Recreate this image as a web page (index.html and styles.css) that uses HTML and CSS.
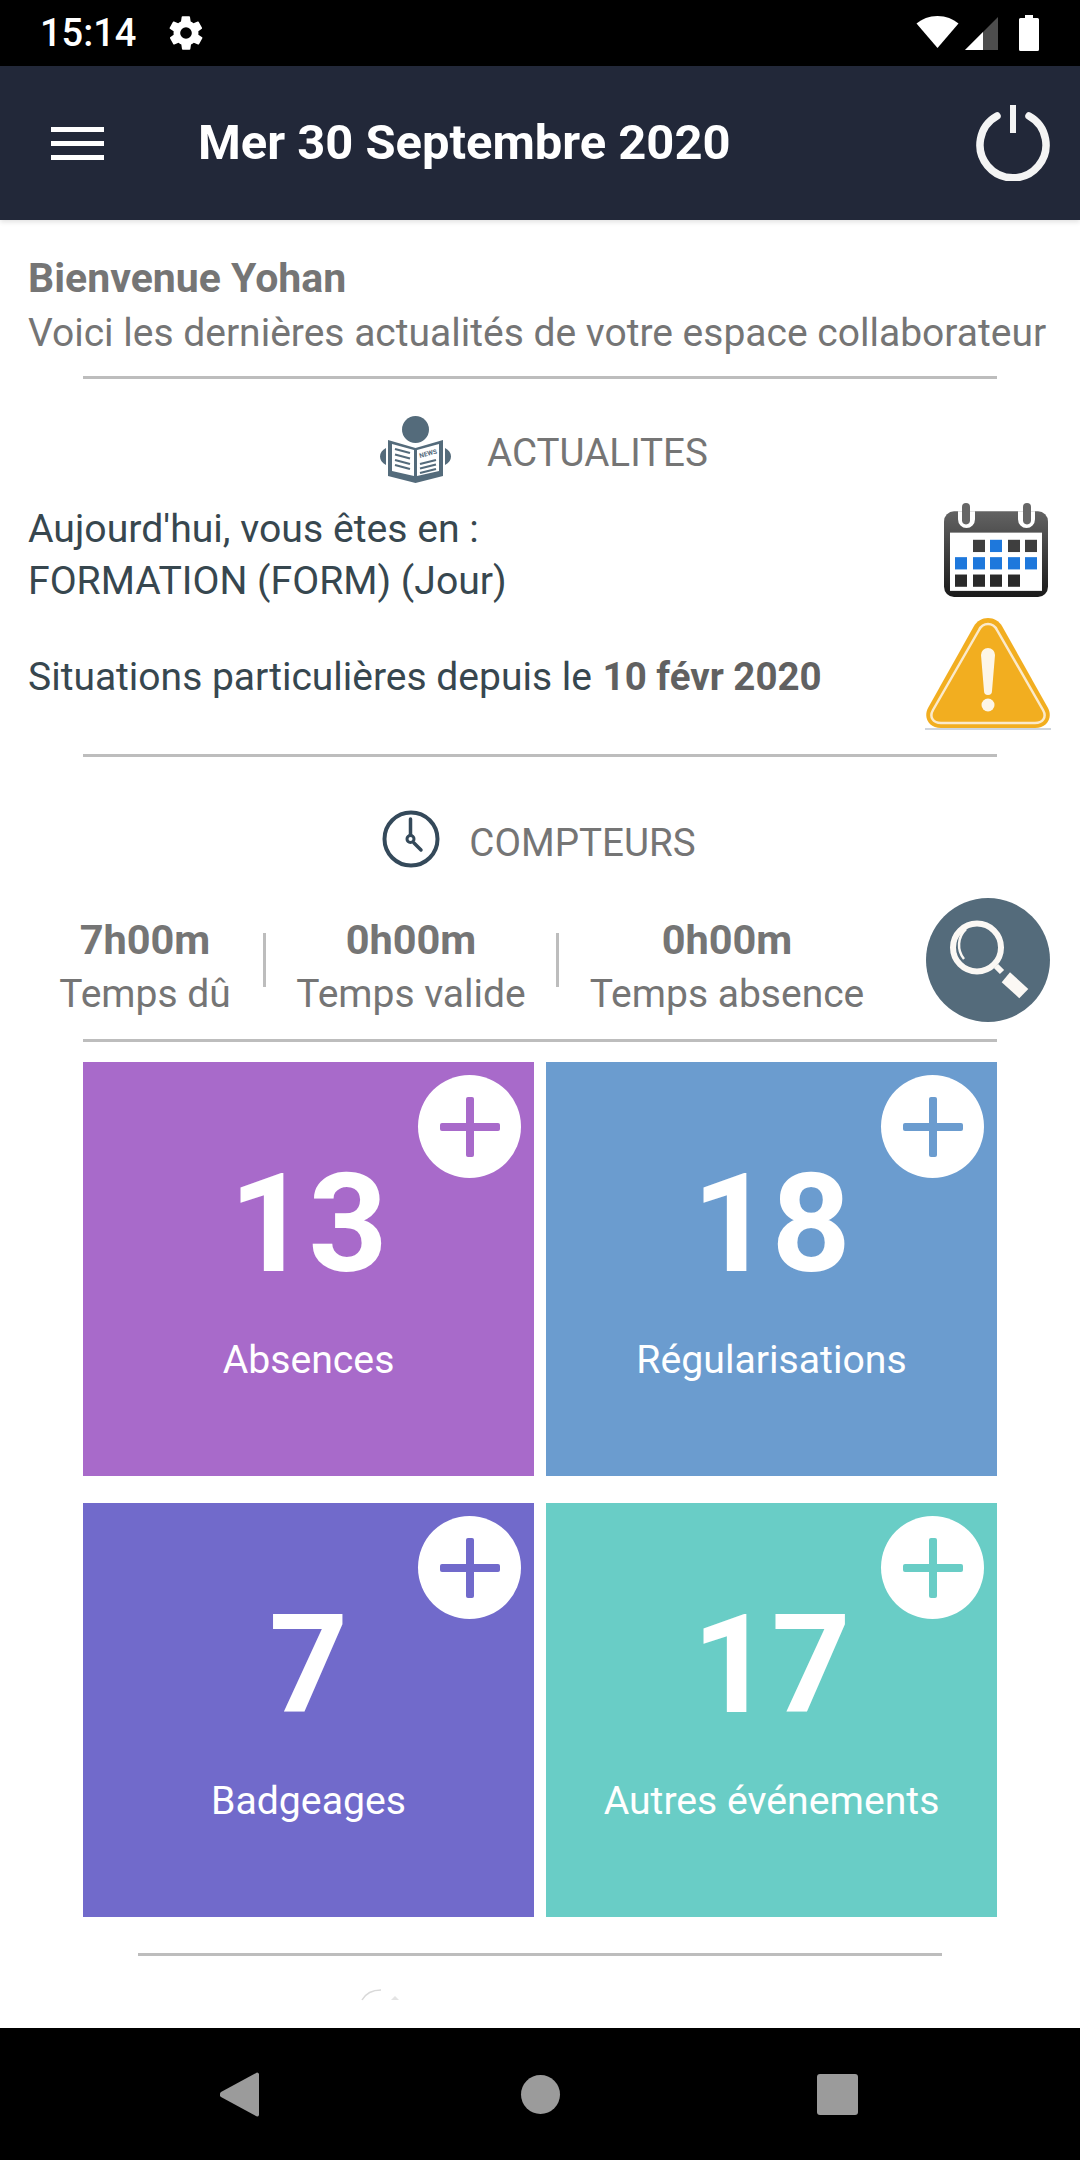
FILE: index.html
```html
<!DOCTYPE html>
<html lang="fr">
<head>
<meta charset="utf-8">
<title>Accueil</title>
<link rel="stylesheet" href="styles.css">
</head>
<body>
<div class="screen">
  <div class="statusbar">
    <div class="status-left">
      <span class="clock">15:14</span>
      <svg class="gear" viewBox="0 0 24 24"><path fill="#fff" d="M19.4 13a7.5 7.5 0 0 0 0-2l2.1-1.6a.5.5 0 0 0 .1-.6l-2-3.5a.5.5 0 0 0-.6-.2l-2.5 1a7.300 7.300 0 0 0-1.700-1l-.4-2.700a.5.5 0 0 0-.5-.4h-4a.5.500 0 0 0-.5.4l-.4 2.700a7.700 7.700 0 0 0-1.700 1l-2.500-1a.5.5 0 0 0-.6.200l-2 3.500a.5.500 0 0 0 .1.600L4.600 11a7.500 7.500 0 0 0 0 2l-2.100 1.600a.5.500 0 0 0-.1.600l2 3.500a.5.500 0 0 0 .6.200l2.500-1a7.300 7.300 0 0 0 1.700 1l.4 2.700a.5.500 0 0 0 .5.400h4a.5.500 0 0 0 .5-.4l.4-2.700a7.700 7.700 0 0 0 1.700-1l2.500 1a.5.500 0 0 0 .6-.2l2-3.500a.5.500 0 0 0-.1-.6zM12 15.500a3.500 3.500 0 1 1 0-7 3.500 3.500 0 0 1 0 7z"/></svg>
    </div>
    <div class="status-right">
      <svg class="wifi" viewBox="0 0 43 32"><path fill="#fff" d="M21.500 32 0.500 7.500C6 3 13 0 21.500 0S37 3 42.500 7.500z"/></svg>
      <svg class="signal" viewBox="0 0 33 33"><path fill="#4d4d4d" d="M33 0v33H0z"/><path fill="#fff" d="M18 15v18H0z"/></svg>
      <svg class="battery" viewBox="0 0 20 36"><path fill="#fff" d="M6 0h8v3h4.500a1.500 1.500 0 0 1 1.500 1.500v30a1.500 1.500 0 0 1-1.500 1.500h-17A1.500 1.500 0 0 1 0 34.500v-30A1.500 1.500 0 0 1 1.500 3H6z"/></svg>
    </div>
  </div>

  <header class="appbar">
    <div class="burger"><i></i><i></i><i></i></div>
    <h1 class="date">Mer 30 Septembre 2020</h1>
    <svg class="power" viewBox="0 0 76 76"><path fill="none" stroke="#f4f4f4" stroke-width="7.500" stroke-linecap="round" d="M21 11A33 33 0 1 0 53 11"/><path fill="none" stroke="#f4f4f4" stroke-width="6" d="M37 0v28"/></svg>
  </header>

  <main class="content">
    <section class="welcome">
      <p class="hello">Bienvenue Yohan</p>
      <p class="intro">Voici les dernières actualités de votre espace collaborateur</p>
    </section>
    <hr class="rule">

    <div class="section-title news-title">
      <svg class="news-icon" viewBox="0 0 71 67">
        <circle cx="35.500" cy="13.500" r="13.500" fill="#546b7b"/>
        <path fill="#546b7b" d="M8 24l27.500 8L63 24v36l-27.500 7L8 60z"/>
        <path fill="#fff" d="M12 28l22 6v26l-22-5zM37 34l22-6v27l-22 5z"/>
        <path fill="#546b7b" d="M6 32v17C2 47 0 44 0 40.500S2 34 6 32zM65 32v17c4-2 6-5 6-8.500S69 34 65 32z"/>
        <path fill="none" stroke="#546b7b" stroke-width="2.200" d="M15 33l15 4M15 38.500l15 4M15 44l15 4M15 49l15 4M40 48l16-4M40 52.500l16-4M40 57l16-4"/>
        <text class="news-word" x="40" y="42" transform="rotate(-15 40 42)">NEWS</text>
      </svg>
      <span>ACTUALITES</span>
    </div>

    <div class="info-row today">
      <p>Aujourd'hui, vous êtes en :<br>FORMATION (FORM) (Jour)</p>
      <svg class="calendar" viewBox="0 0 104 92" preserveAspectRatio="none">
        <defs><linearGradient id="calgrad" x1="0" y1="0" x2="0" y2="1"><stop offset="0" stop-color="#636363"/><stop offset="1" stop-color="#1a1a1a"/></linearGradient></defs>
        <rect x="0" y="8" width="104" height="84" rx="10" fill="url(#calgrad)"/>
        <rect x="6" y="29" width="92" height="57" fill="#fff"/>
        <path fill="#fff" d="M14 8h17v8a8.500 8.500 0 0 1-17 0zM74 8h17v8a8.500 8.500 0 0 1-17 0z"/>
        <rect x="18" y="0" width="8" height="21" rx="4" fill="#666"/><rect x="79" y="0" width="8" height="21" rx="4" fill="#666"/>
        <g fill="#3e3e3e"><rect x="29" y="36" width="12" height="12"/><rect x="64" y="36" width="12" height="12"/><rect x="81" y="36" width="12" height="12"/></g>
        <g fill="#1e78dc"><rect x="46" y="36" width="12" height="12"/><rect x="11" y="53" width="12" height="12"/><rect x="29" y="53" width="12" height="12"/><rect x="46" y="53" width="12" height="12"/><rect x="64" y="53" width="12" height="12"/><rect x="81" y="53" width="12" height="12"/></g>
        <g fill="#2a2a2a"><rect x="11" y="70" width="12" height="12"/><rect x="29" y="70" width="12" height="12"/><rect x="46" y="70" width="12" height="12"/><rect x="64" y="70" width="12" height="12"/></g>
      </svg>
    </div>

    <div class="info-row situations">
      <p>Situations particulières depuis le <b>10 févr 2020</b></p>
      <svg class="warning" viewBox="0 0 126 112">
        <path fill="#f2ae20" d="M63 0c6 0 11 3 14 8l46 82c5 10-1 20-13 20H16C4 110-2 100 3 90L49 8c3-5 8-8 14-8z"/>
        <path fill="none" stroke="#fbeacb" stroke-width="2.500" d="M63 6c4 0 7 2 9 6l46 80c4 7 0 13-8 13H16c-8 0-12-6-8-13l46-80c2-4 5-6 9-6z"/>
        <path fill="#fdf6e8" d="M56 37a7 7 0 0 1 14 0l-3 36a4 4 0 0 1-8 0z"/>
        <circle cx="63" cy="87" r="6.500" fill="#fdf6e8"/>
        <rect x="0" y="110" width="126" height="2" fill="#cfd5de"/>
      </svg>
    </div>
    <hr class="rule">

    <div class="section-title clock-title">
      <svg class="clock-icon" viewBox="0 0 58 58">
        <circle cx="29" cy="29" r="26.500" fill="none" stroke="#34495a" stroke-width="4"/>
        <path fill="none" stroke="#34495a" stroke-width="3.500" stroke-linecap="round" d="M28.500 9v16M32 33l7 7"/>
        <circle cx="28.500" cy="29" r="3.500" fill="none" stroke="#34495a" stroke-width="3"/>
      </svg>
      <span>COMPTEURS</span>
    </div>

    <div class="counters">
      <div class="counter c1"><b>7h00m</b><span>Temps dû</span></div>
      <i class="sep"></i>
      <div class="counter c2"><b>0h00m</b><span>Temps valide</span></div>
      <i class="sep"></i>
      <div class="counter c3"><b>0h00m</b><span>Temps absence</span></div>
      <svg class="search" viewBox="0 0 124 124">
        <circle cx="62" cy="62" r="62" fill="#546b7b"/>
        <circle cx="51" cy="49.500" r="24" fill="none" stroke="#fbf8f4" stroke-width="6"/>
        <path fill="none" stroke="#fbf8f4" stroke-width="2.500" d="M40 31A22 22 0 0 0 38 61"/>
        <path fill="none" stroke="#fbf8f4" stroke-width="6" d="M70 68l6 6"/>
        <path fill="#fbf8f4" d="M75.700 84.300 84 74.300 102.300 91 93.300 100.300z"/>
      </svg>
    </div>
    <hr class="rule">

    <div class="tiles">
      <a class="tile purple"><span class="plus"><svg viewBox="0 0 60 60"><rect x="26" width="8" height="60" rx="2"/><rect y="26" width="60" height="8" rx="2"/></svg></span><b>13</b><span class="tile-label">Absences</span></a>
      <a class="tile blue"><span class="plus"><svg viewBox="0 0 60 60"><rect x="26" width="8" height="60" rx="2"/><rect y="26" width="60" height="8" rx="2"/></svg></span><b>18</b><span class="tile-label">Régularisations</span></a>
      <a class="tile indigo"><span class="plus"><svg viewBox="0 0 60 60"><rect x="26" width="8" height="60" rx="2"/><rect y="26" width="60" height="8" rx="2"/></svg></span><b>7</b><span class="tile-label">Badgeages</span></a>
      <a class="tile teal"><span class="plus"><svg viewBox="0 0 60 60"><rect x="26" width="8" height="60" rx="2"/><rect y="26" width="60" height="8" rx="2"/></svg></span><b>17</b><span class="tile-label">Autres événements</span></a>
    </div>

    <hr class="rule short">
    <svg class="peek" viewBox="0 0 40 12"><path fill="none" stroke="#d9d9d9" stroke-width="1.500" d="M1 11C5 4 12 1 20 1"/><path fill="#e4e4e4" d="M30 11l4-4 4 4z"/></svg>
  </main>

  <nav class="navbar">
    <svg class="nav-back" viewBox="0 0 39 45"><path fill="#9b9b9b" d="M37 0.500a2 2 0 0 1 2 1.500v41a2 2 0 0 1-2 1.500L1 25a3.500 3.500 0 0 1 0-5z"/></svg>
    <i class="nav-home"></i>
    <i class="nav-recent"></i>
  </nav>
</div>
</body>
</html>
```
FILE: styles.css
```css
* { box-sizing: border-box; }
html, body { margin: 0; padding: 0; }
body { width: 1080px; height: 2160px; background: #fff; font-family: Roboto, "Liberation Sans", sans-serif; overflow: hidden; }
.screen { width: 1080px; height: 2160px; display: flex; flex-direction: column; }
p, h1 { margin: 0; font-weight: inherit; }

.statusbar { height: 66px; background: #000; display: flex; justify-content: space-between; align-items: center; flex: none; }
.status-left { display: flex; align-items: center; padding-left: 40px; }
.clock { color: #fff; font-size: 38px; line-height: 38px; font-weight: 500; width: 126px; }
.gear { width: 40px; height: 40px; }
.status-right { position: relative; width: 165px; height: 66px; }
.wifi { position: absolute; left: 1px; top: 16px; width: 43px; height: 32px; }
.signal { position: absolute; left: 50px; top: 17px; width: 33px; height: 33px; }
.battery { position: absolute; left: 104px; top: 15px; width: 20px; height: 36px; }

.appbar { height: 154px; background: #222839; display: flex; align-items: center; flex: none; box-shadow: 0 2px 5px rgba(0,0,0,.12); padding-left: 51px; position: relative; }
.burger { display: flex; flex-direction: column; gap: 9px; width: 53px; }
.burger i { display: block; height: 5px; background: #fff; }
.date { color: #fff; font-size: 48.900px; font-weight: 700; margin-left: 94px; line-height: 54px; white-space: nowrap; flex: 1; }
.power { width: 76px; height: 76px; margin-right: 28px; }

.content { flex: 1; display: flex; flex-direction: column; background: #fff; overflow: hidden; }
.welcome { padding: 34px 0 19px 28px; }
.hello { color: #757575; font-size: 41px; line-height: 48px; font-weight: 700; }
.intro { color: #757575; font-size: 39px; line-height: 48px; white-space: nowrap; margin-top: 7px; }
.rule { border: 0; height: 3px; background: #bdbdbd; margin: 0 83px; flex: none; }

.section-title { display: flex; align-items: center; justify-content: center; color: #757575; font-size: 38.600px; }
.news-title { height: 120px; padding: 26px 0 0 8px; }
.news-icon { width: 71px; height: 67px; margin: 0 36px 6px 0; }
.news-word { font-size: 6.500px; font-weight: 700; fill: #546b7b; }
.clock-title { height: 137px; padding: 33px 2px 0 0; }
.clock-icon { width: 58px; height: 58px; margin: 0 29px 6px 0; }

.info-row { display: flex; justify-content: space-between; align-items: center; color: #37474f; font-size: 39px; padding-left: 28px; }
.info-row b { color: #616161; font-weight: 700; font-size: 38.500px; margin-left: 1px; }
.today { font-size: 39.200px; line-height: 52px; height: 112px; padding-right: 32px; }
.calendar { width: 104px; height: 94px; margin-bottom: 10px; }
.situations { height: 143px; padding-right: 29px; padding-bottom: 12px; }
.warning { width: 126px; height: 112px; margin-bottom: 6px; }

.counters { display: flex; align-items: center; height: 145px; padding-left: 27px; }
.counter { display: flex; flex-direction: column; align-items: center; color: #757575; font-size: 39px; line-height: 55px; white-space: nowrap; }
.counter b { font-weight: 700; font-size: 41.500px; }
.c1 { width: 236px; }
.c2 { width: 290px; }
.c3 { width: 336px; }
.sep { width: 3px; height: 54px; background: #bdbdbd; flex: none; margin-bottom: 14px; }
.search { width: 124px; height: 124px; margin: 0 0 14px 31px; }

.tiles { display: grid; grid-template-columns: 451px 451px; column-gap: 12px; row-gap: 27px; grid-auto-rows: 414px; padding: 20px 83px 0; }
.tile { position: relative; display: flex; flex-direction: column; align-items: center; color: #fff; padding-top: 88px; }
.tile b { font-size: 138px; line-height: 148px; font-weight: 700; }
.tile-label { font-size: 39.200px; line-height: 48px; margin-top: 38px; }
.plus { position: absolute; top: 13px; right: 13px; width: 103px; height: 103px; border-radius: 50%; background: #fff; display: flex; align-items: center; justify-content: center; }
.plus svg { width: 60px; height: 60px; }
.purple { background: #a86aca; } .purple svg { fill: #a86aca; }
.blue { background: #6b9ccf; } .blue svg { fill: #6b9ccf; }
.indigo { background: #716acb; } .indigo svg { fill: #716acb; }
.teal { background: #69cdc6; } .teal svg { fill: #69cdc6; }

.rule.short { margin: 36px 138px 0; }
.peek { width: 40px; height: 12px; margin: 33px 0 0 361px; flex: none; }

.navbar { height: 132px; background: #000; flex: none; position: relative; }
.nav-back { position: absolute; left: 220px; top: 44px; width: 39px; height: 45px; }
.nav-home { position: absolute; left: 521px; top: 47px; width: 39px; height: 39px; border-radius: 50%; background: #9b9b9b; }
.nav-recent { position: absolute; left: 817px; top: 46px; width: 41px; height: 41px; border-radius: 3px; background: #9b9b9b; }
```
